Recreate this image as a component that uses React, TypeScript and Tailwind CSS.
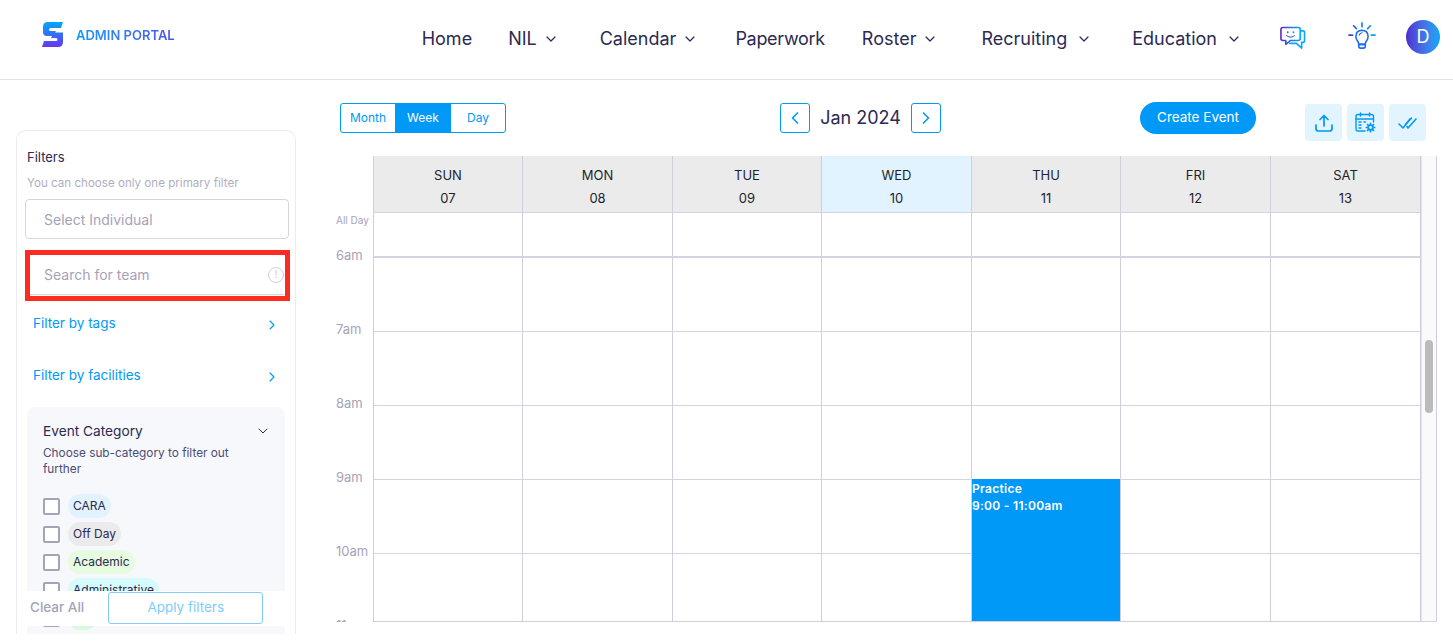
import React from "react";
import { ChevronDown, ChevronLeft, ChevronRight } from "lucide-react";

const font = "font-['Inter','Noto_Sans',sans-serif]";

function NavItem({ label, menu, className, chevron }: { label: string; menu?: boolean; className?: string; chevron?: string }) {
  return (
    <div className={"flex items-center text-[18px] leading-[24px] text-[#2b2a52] " + (className ?? "")}>
      <span>{label}</span>
      {menu && <ChevronDown className={"h-[16px] w-[16px] " + (chevron ?? "ml-[6px]")} strokeWidth={1.8} />}
    </div>
  );
}

function Logo() {
  return (
    <svg width="22" height="26" viewBox="0 0 22 26" className="shrink-0">
      <defs>
        <linearGradient id="lg" x1="0" y1="0" x2="0" y2="1">
          <stop offset="0" stopColor="#00a8f8" />
          <stop offset="0.45" stopColor="#2f74f5" />
          <stop offset="1" stopColor="#6a35f2" />
        </linearGradient>
      </defs>
      <path
        d="M6 0H21L19 6H8.500Q7 6 7 7.500T8.500 9H14L11 14H5Q1 14 1 10V5Q1 0 6 0ZM12 10.500H21V20Q21 25 16 25H0L2 19H14Q15.500 19 15.500 17.500T14 16H9Z"
        fill="url(#lg)"
      />
    </svg>
  );
}

function ChatIcon() {
  return (
    <svg width="26" height="26" viewBox="0 0 27 27" fill="none" strokeLinecap="round" strokeLinejoin="round">
      <defs>
        <linearGradient id="cg" x1="0" y1="0" x2="1" y2="0">
          <stop offset="0" stopColor="#5b2ed0" />
          <stop offset="1" stopColor="#00a8f8" />
        </linearGradient>
      </defs>
      <path d="M3 1.500H19Q21 1.500 21 3.500V13Q21 15 19 15H11L6 19V15H3Q1 15 1 13V3.500Q1 1.500 3 1.500Z" stroke="url(#cg)" strokeWidth="1.700" />
      <path d="M21.500 5H24Q25.500 5 25.500 7V15Q25.500 17 24 17H22.500V23L17 18H10" stroke="#0ea5f5" strokeWidth="1.700" />
      <circle cx="8" cy="6.500" r="1" fill="#3b5fdc" />
      <circle cx="14" cy="6.500" r="1" fill="#3b7fe4" />
      <path d="M7 10Q11 13 15 10" stroke="#3b6fe0" strokeWidth="1.200" />
    </svg>
  );
}

function BulbIcon() {
  return (
    <svg width="28" height="28" viewBox="0 0 30 30" fill="none" strokeLinecap="round" strokeLinejoin="round">
      <defs>
        <linearGradient id="bg" x1="0" y1="0" x2="1" y2="0">
          <stop offset="0" stopColor="#4a3fd8" />
          <stop offset="1" stopColor="#00a8f8" />
        </linearGradient>
      </defs>
      <path d="M15 9Q21.500 9 21.500 15.500Q21.500 18 20 20Q18.500 21.500 18.500 24H11.500Q11.500 21.500 10 20Q8.500 18 8.500 15.500Q8.500 9 15 9Z" stroke="#1d6fe8" strokeWidth="1.700" />
      <path d="M11.500 24H18.500V26Q18.500 28 16.500 28H13.500Q11.500 28 11.500 26Z" stroke="#1d6fe8" strokeWidth="1.700" />
      <path d="M12 14Q12.500 12 15 11.500" stroke="#1d6fe8" strokeWidth="1.300" />
      <path d="M6 4L9 7M24 4L21 7M1 14H5M25 14H29" stroke="url(#bg)" strokeWidth="1.800" />
      <path d="M15 1V5" stroke="#2a7eea" strokeWidth="1.800" />
    </svg>
  );
}

function UploadIcon() {
  return (
    <svg width="20" height="20" viewBox="0 0 20 20" fill="none" stroke="#0099f8" strokeWidth="1.700" strokeLinecap="round" strokeLinejoin="round">
      <path d="M10 13V2.500M6 6.500L10 2.500L14 6.500" />
      <path d="M2 12V15.500Q2 18 4.500 18H15.500Q18 18 18 15.500V12" />
    </svg>
  );
}

function CalendarGear() {
  return (
    <svg width="21" height="21" viewBox="0 0 21 21" fill="none" stroke="#0099f8" strokeWidth="1.400" strokeLinecap="round" strokeLinejoin="round">
      <path d="M10 19H3Q1 19 1 17V4.500Q1 2.500 3 2.500H16.500Q18.500 2.500 18.500 4.500V10" />
      <path d="M1 7H18.500M5.500 1V4M14.500 1V4" />
      <path d="M4 10H6M4 13H6M4 16H6M9 10H10.500" strokeWidth="1.600" />
      <circle cx="15.500" cy="15.500" r="2.300" strokeWidth="1.700" />
      <path d="M15.500 11.300V12.500M15.500 18.500V19.700M11.300 15.500H12.500M18.500 15.500H19.700M12.500 12.500L13.300 13.300M17.700 17.700L18.500 18.500M18.500 12.500L17.700 13.300M13.300 17.700L12.500 18.500" strokeWidth="1.700" />
    </svg>
  );
}

function DoubleCheck() {
  return (
    <svg width="20" height="14" viewBox="0 0 20 14" fill="none" stroke="#0099f8" strokeWidth="1.600" strokeLinecap="round" strokeLinejoin="round">
      <path d="M1 8L5 12L12 3" />
      <path d="M9 10.500L10 12L18 3" />
      <path d="M8 8L13.500 2" />
    </svg>
  );
}

function Check({ label, bg, className }: { label: string; bg: string; className?: string }) {
  return (
    <div className={"flex h-[24px] items-center " + (className ?? "")}>
      <span className="mr-[8px] h-[17px] w-[17px] rounded-[2px] border-2 border-[#a5a3b8] bg-white" />
      <span className={"flex h-[24px] items-center rounded-full px-[5px] text-[12px] text-[#2b2a52] " + bg}>{label}</span>
    </div>
  );
}

function Sidebar() {
  return (
    <aside className="relative ml-[16px] mt-[50px] h-[504px] w-[280px] shrink-0 overflow-hidden rounded-t-[10px] border border-b-0 border-[#ececf0] bg-white">
      <div className="px-[8px] pt-[18px]">
        <p className="ml-[2px] text-[13px] leading-[16px] text-[#2b2a52]">Filters</p>
        <p className="ml-[2px] mt-[10px] text-[11.6px] leading-[16px] text-[#b0aec2]">You can choose only one primary filter</p>
        <div className="mt-[8px] flex h-[40px] w-[264px] items-center rounded-[4px] border border-[#d5d5d9] pl-[18px] text-[14px] text-[#a5a3b8]">
          Select Individual
        </div>
        <div className="relative ml-[5px] mt-[16px] flex h-[40px] w-[254px] items-center justify-between border-b border-[#d5d5d9] pl-[14px] text-[14px] text-[#a5a3b8]">
          <span>Search for team</span>
          <span className="flex h-[16px] w-[16px] items-center justify-center rounded-full border border-[#cfcede] text-[11px] leading-none text-[#cfcede]">!</span>
        </div>
        <div className="mt-[17px] flex items-center justify-between pl-[8px] pr-[7px] text-[13.5px] leading-[22px] text-[#0099f8]">
          <span>Filter by tags</span>
          <ChevronRight className="mt-[4px] h-[16px] w-[16px]" strokeWidth={1.7} />
        </div>
        <div className="mt-[30px] flex items-center justify-between pl-[8px] pr-[7px] text-[13.5px] leading-[22px] text-[#0099f8]">
          <span>Filter by facilities</span>
          <ChevronRight className="mt-[4px] h-[16px] w-[16px]" strokeWidth={1.7} />
        </div>
        <div className="ml-[2px] mt-[21px] h-[260px] w-[258px] rounded-[8px] bg-[#f7f8fb] pl-[16px] pr-[14px] pt-[14px]">
          <div className="flex items-center justify-between text-[13.7px] leading-[20px] text-[#2b2a52]">
            <span>Event Category</span>
            <ChevronDown className="h-[16px] w-[16px]" strokeWidth={1.5} />
          </div>
          <p className="mt-[4px] max-w-[200px] text-[11.8px] leading-[16px] text-[#4d4c74]">Choose sub-category to filter out further</p>
          <div className="mt-[17px] flex flex-col gap-[4px]">
            <Check label="CARA" bg="bg-[#e1f3fe]" />
            <Check label="Off Day" bg="bg-[#ebebeb]" />
            <Check label="Academic" bg="bg-[#e6fbdf]" />
            <Check label="Administrative" bg="bg-[#d5fbfc]" />
            <Check label="NIL" bg="bg-[#d8f8e0]" />
          </div>
        </div>
      </div>
      <div className="absolute left-0 top-[460px] flex h-[35px] w-[268px] items-center bg-white">
        <span className="mb-[3px] ml-[13px] text-[13.5px] font-medium text-[#a5a3b8]">Clear All</span>
        <span className="mb-[2px] ml-[24px] flex h-[32px] w-[155px] items-center justify-center rounded-[3px] border border-[#80ccfb] text-[13.5px] text-[#80ccfb]">
          Apply filters
        </span>
      </div>
    </aside>
  );
}

const days = [
  ["SUN", "07"],
  ["MON", "08"],
  ["TUE", "09"],
  ["WED", "10"],
  ["THU", "11"],
  ["FRI", "12"],
  ["SAT", "13"],
];
const cols = "grid grid-cols-[149px_150px_149px_150px_149px_150px_150px]";
const rowHeights = ["h-[45px] border-b-2", "h-[74px] border-b", "h-[74px] border-b", "h-[74px] border-b", "h-[74px] border-b", "h-[68px]"];
const hours = ["6am", "7am", "8am", "9am", "10am", "11am"];

function Calendar() {
  return (
    <div className="ml-[-4px] mt-[15px] flex h-[466px] w-[1101px]">
      <div className="h-[466px] w-[37px] shrink-0 overflow-hidden pt-[57px]">
        <p className="h-[34px] text-[10px] leading-[14px] text-[#a5a3b8]">All Day</p>
        {hours.map((h) => (
          <p key={h} className="h-[74px] text-[13px] leading-[16px] text-[#a5a3b8]">{h}</p>
        ))}
      </div>
      <div className="relative w-[1048px] shrink-0 overflow-hidden border-b border-l border-[#cfcede]">
        <div className={cols + " h-[57px] border-b border-[#d5d3e0]"}>
          {days.map(([d, n]) => (
            <div
              key={d}
              className={"flex flex-col items-center border-r border-[#cfcede] pt-[8px] text-[13px] leading-[23px] text-[#1f1f2e] " + (d === "WED" ? "bg-[#e0f3fe]" : "bg-[#ebebeb]")}
            >
              <span>{d}</span>
              <span>{n}</span>
            </div>
          ))}
        </div>
        {rowHeights.map((rh, i) => (
          <div key={i} className={cols + " border-[#d5d3e0] " + rh}>
            {days.map(([d]) => (
              <div key={d} className="border-r border-[#cfcede]" />
            ))}
          </div>
        ))}
        <div className="absolute left-[598px] top-[323px] h-[143px] w-[148px] bg-[#0099f8] text-[12px] font-semibold leading-[17px] tracking-[0.3px] text-white">
          <p className="pt-[1px]">Practice</p>
          <p>9:00 - 11:00am</p>
        </div>
      </div>
      <div className="relative w-[16px] shrink-0 border-b border-l border-r border-b-[#d5d5de] border-l-[#e4e4e4] border-r-[#cfcede] bg-[#fafafa]">
        <div className="absolute left-[3px] top-[184px] h-[73px] w-[8px] rounded-full bg-[#bbbbbb]" />
      </div>
    </div>
  );
}

export default function App() {
  return (
    <div className={"h-[644px] w-[1453px] overflow-hidden bg-white " + font}>
      <header className="flex h-[80px] items-center border-b border-[#e5e5e5]">
        <div className="mb-[9px] ml-[42px] flex items-center">
          <Logo />
          <span className="ml-[12px] mt-[2px] bg-gradient-to-r from-[#0099f8] to-[#4a50ee] bg-clip-text text-[13px] font-semibold text-transparent">
            ADMIN PORTAL
          </span>
        </div>
        <nav className="ml-[247px] mt-[-2px] flex items-center">
          <NavItem label="Home" />
          <NavItem label="NIL" menu className="ml-[36px]" />
          <NavItem label="Calendar" menu className="ml-[41px]" />
          <NavItem label="Paperwork" className="ml-[37px] tracking-[-0.3px]" />
          <NavItem label="Roster" menu className="ml-[37px]" />
          <NavItem label="Recruiting" menu className="ml-[43px]" chevron="ml-[9px]" />
          <NavItem label="Education" menu className="ml-[40px]" chevron="ml-[9px]" />
        </nav>
        <div className="mr-[13px] ml-auto flex items-center">
          <span className="mb-[2px]"><ChatIcon /></span>
          <span className="mb-[7px] ml-[42px]"><BulbIcon /></span>
          <span className="mb-[6px] ml-[30px] flex h-[34px] w-[34px] items-center justify-center rounded-full bg-gradient-to-r from-[#4f2bcf] to-[#00a8f8] text-[18px] text-white">D</span>
        </div>
      </header>
      <div className="flex">
        <Sidebar />
        <main className="ml-[44px] pt-[23px]">
          <div className="flex items-start">
            <div className="flex h-[30px] w-[166px] overflow-hidden rounded-[3px] border border-[#0099f8] text-[12px] text-[#0099f8]">
              <span className="flex w-[54px] items-center justify-center">Month</span>
              <span className="flex w-[56px] items-center justify-center bg-[#0099f8] text-white">Week</span>
              <span className="flex w-[54px] items-center justify-center">Day</span>
            </div>
            <div className="ml-[274px] flex h-[30px] items-center">
              <span className="flex h-[30px] w-[30px] items-center justify-center rounded-[3px] border border-[#0099f8] text-[#0099f8]">
                <ChevronLeft className="h-[20px] w-[20px]" strokeWidth={2} />
              </span>
              <span className="mb-[1px] w-[101px] text-center text-[18px] text-[#2b2a52]">Jan 2024</span>
              <span className="flex h-[30px] w-[30px] items-center justify-center rounded-[3px] border border-[#0099f8] text-[#0099f8]">
                <ChevronRight className="h-[20px] w-[20px]" strokeWidth={2} />
              </span>
            </div>
            <button className="ml-[199px] mt-[-1px] flex h-[32px] w-[116px] items-center justify-center rounded-full bg-[#0099f8] pb-[1px] text-[13.5px] text-white">
              Create Event
            </button>
            <div className="ml-[49px] mt-[1px] flex gap-[5px]">
              <span className="flex h-[37px] w-[37px] items-center justify-center rounded-[4px] bg-[#e2f4fe]"><UploadIcon /></span>
              <span className="flex h-[37px] w-[37px] items-center justify-center rounded-[4px] bg-[#e2f4fe]"><CalendarGear /></span>
              <span className="flex h-[37px] w-[37px] items-center justify-center rounded-[4px] bg-[#e2f4fe]"><DoubleCheck /></span>
            </div>
          </div>
          <Calendar />
        </main>
      </div>
      <div className="absolute left-[25px] top-[250px] h-[51px] w-[265px] border-[5px] border-[#ff2a20]" />
    </div>
  );
}
